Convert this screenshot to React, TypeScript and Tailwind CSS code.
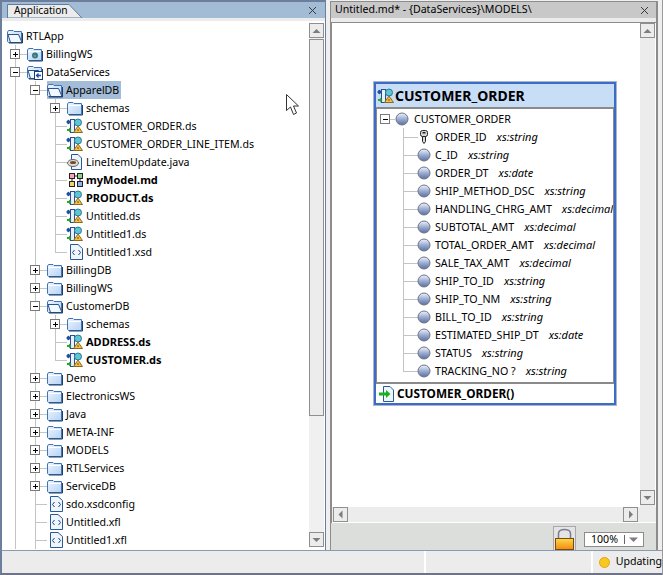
import type { ReactNode } from "react";

const font = "font-['Noto_Sans',sans-serif]";

// expander box on the tree lines
function Expander({ open }: { open: boolean }) {
  return (
    <svg width="11" height="11" viewBox="0 0 11 11" className="absolute left-[5px] top-[4px]">
      <rect x="0.5" y="0.5" width="9" height="9" fill="#fff" stroke="#7a7a7a" />
      <path d="M2.5 5H7.5" stroke="#000" shapeRendering="crispEdges" />
      {!open && <path d="M5 2.5V7.5" stroke="#000" shapeRendering="crispEdges" />}
    </svg>
  );
}

function FolderIcon({ open, badge }: { open?: boolean; badge?: "web" | "arrow" }) {
  return (
    <svg width="16" height="16" viewBox="0 0 16 16" className="shrink-0">
      <defs>
        <linearGradient id="fold" x1="0" y1="0" x2="1" y2="1">
          <stop offset="0" stopColor="#eef6ff" />
          <stop offset="1" stopColor="#b5d2f3" />
        </linearGradient>
      </defs>
      <path d="M0.5 4L1.5 2.5H6L7 3.5H14.5V14.5H1.5L0.5 13.5Z" fill="url(#fold)" stroke="#3f74b8" />
      {open ? (
        <path d="M1 6.5H11.5L15 14.5H3.5Z" fill="#f2f8ff" stroke="#2b5488" />
      ) : (
        <path d="M1.5 5.5H14" stroke="#fff" />
      )}
      <path d="M2 15H15.5V5" fill="none" stroke="#1d3f68" strokeWidth="1" />
      {badge === "web" && (
        <g>
          <circle cx="8" cy="9.5" r="3" fill="#33778a" />
          <path d="M6.5 9H9V11H7Z" fill="#7c9a4a" />
        </g>
      )}
      {badge === "arrow" && (
        <g>
          <rect x="7.5" y="7.5" width="8" height="8" fill="#fff" stroke="#1c3a78" />
          <path d="M14 11.5H10M11.5 9.5L9.5 11.5L11.5 13.5" fill="none" stroke="#1a4cb0" strokeWidth="1.3" />
        </g>
      )}
    </svg>
  );
}

function DataSpaceIcon() {
  return (
    <svg width="17" height="16" viewBox="0 0 17 16" className="shrink-0">
      <rect x="4.5" y="1.5" width="4" height="13" fill="#e8f1fb" stroke="#2a4f8f" />
      <rect x="1" y="2.5" width="3" height="3" fill="#1f4fa0" />
      <path d="M0 4L3 1.5V6.5Z" fill="#1f4fa0" />
      <path d="M1 12H4" stroke="#2aa52a" strokeWidth="2" />
      <path d="M3 9.5L5.5 12L3 14.5Z" fill="#2aa52a" />
      <circle cx="12" cy="4.5" r="3.5" fill="#5cc6d6" stroke="#2b7c90" />
      <path d="M12 8L16.5 14.5H7.5Z" fill="#f4c04a" stroke="#8a6a20" />
      <path d="M12 11V13" stroke="#7a4a10" />
    </svg>
  );
}

function CodeFileIcon() {
  return (
    <svg width="13" height="16" viewBox="0 0 13 16" className="shrink-0">
      <path d="M0.5 0.5H8L12.5 4.5V15.5H0.5Z" fill="#eef5fc" stroke="#2a5a96" />
      <path d="M4.5 6L2.5 8.5L4.5 11M8.5 6L10.5 8.5L8.5 11" fill="none" stroke="#22466f" />
    </svg>
  );
}

function JavaIcon() {
  return (
    <svg width="16" height="16" viewBox="0 0 16 16" className="shrink-0">
      <path d="M4.5 0.5H11L14.5 4V15.5H4.5Z" fill="#eef5fc" stroke="#2a5a96" />
      <ellipse cx="6" cy="9" rx="5.5" ry="3.5" fill="#dcdcdc" stroke="#666" />
      <ellipse cx="6" cy="8.5" rx="3" ry="1.5" fill="#7a4a22" />
    </svg>
  );
}

function ModelIcon() {
  return (
    <svg width="14" height="14" viewBox="0 0 14 14" className="shrink-0">
      <rect x="0.5" y="0.5" width="5" height="5" fill="#f4a6b8" stroke="#222" />
      <rect x="8.5" y="0.5" width="5" height="5" fill="#8fd08f" stroke="#222" />
      <rect x="0.5" y="8.5" width="5" height="5" fill="#f2d36b" stroke="#222" />
      <rect x="8.5" y="8.5" width="5" height="5" fill="#8fb4ea" stroke="#222" />
      <path d="M5.5 3H8.5M3 5.5V8.5M11 5.5V8.5" stroke="#222" />
    </svg>
  );
}

function Ball() {
  return (
    <svg width="14" height="14" viewBox="0 0 14 14" className="shrink-0">
      <defs>
        <linearGradient id="ball" x1="0" y1="0" x2="0" y2="1">
          <stop offset="0" stopColor="#f2f4fa" />
          <stop offset="0.5" stopColor="#9badd3" />
          <stop offset="1" stopColor="#5c6f9f" />
        </linearGradient>
      </defs>
      <circle cx="7" cy="7" r="6" fill="url(#ball)" stroke="#6c7486" />
    </svg>
  );
}

function KeyIcon() {
  return (
    <svg width="10" height="14" viewBox="0 0 10 14" className="shrink-0">
      <rect x="1.5" y="0.5" width="7" height="6" rx="2" fill="#d8d8d8" stroke="#222" />
      <rect x="3.5" y="2" width="3" height="1.5" fill="#222" />
      <path d="M3.5 6.5V11.5L5 13.5L6.5 11.5V6.5Z" fill="#d8d8d8" stroke="#222" />
    </svg>
  );
}

// arrow button of a scrollbar
function ScrollBtn({ dir }: { dir: "up" | "down" | "left" | "right" }) {
  const paths = {
    up: "M3 9.5L7 5.5L11 9.5Z",
    down: "M3 5.5L11 5.5L7 9.5Z",
    left: "M9 3L9 11L5 7Z",
    right: "M5.5 3L5.5 11L9.5 7Z",
  };
  return (
    <div className="flex h-[15px] w-[15px] shrink-0 items-center justify-center border border-[#8f8f8f] bg-[#ececec]">
      <svg width="13" height="13" viewBox="0.5 0.5 13 13">
        <path d={paths[dir]} fill="#7d7d7d" />
      </svg>
    </div>
  );
}

function CloseX() {
  return (
    <svg width="9" height="9" viewBox="0 0 9 9">
      <path d="M1 1L8 8M8 1L1 8" stroke="#3a3a3a" fill="none" />
    </svg>
  );
}

type Row = {
  label: string;
  depth: number;
  last?: boolean;
  exp?: "open" | "closed";
  icon: ReactNode;
  bold?: boolean;
  selected?: boolean;
};

const ds = <DataSpaceIcon />;
const code = <CodeFileIcon />;
const closed = <FolderIcon />;
const open = <FolderIcon open />;

const rows: Row[] = [
  { label: "RTLApp", depth: 0, icon: open },
  { label: "BillingWS", depth: 1, exp: "closed", icon: <FolderIcon badge="web" /> },
  { label: "DataServices", depth: 1, exp: "open", icon: <FolderIcon open badge="arrow" /> },
  { label: "ApparelDB", depth: 2, exp: "open", icon: open, selected: true },
  { label: "schemas", depth: 3, exp: "closed", icon: closed },
  { label: "CUSTOMER_ORDER.ds", depth: 3, icon: ds },
  { label: "CUSTOMER_ORDER_LINE_ITEM.ds", depth: 3, icon: ds },
  { label: "LineItemUpdate.java", depth: 3, icon: <JavaIcon /> },
  { label: "myModel.md", depth: 3, icon: <ModelIcon />, bold: true },
  { label: "PRODUCT.ds", depth: 3, icon: ds, bold: true },
  { label: "Untitled.ds", depth: 3, icon: ds },
  { label: "Untitled1.ds", depth: 3, icon: ds },
  { label: "Untitled1.xsd", depth: 3, icon: code, last: true },
  { label: "BillingDB", depth: 2, exp: "closed", icon: closed },
  { label: "BillingWS", depth: 2, exp: "closed", icon: closed },
  { label: "CustomerDB", depth: 2, exp: "open", icon: open },
  { label: "schemas", depth: 3, exp: "closed", icon: closed },
  { label: "ADDRESS.ds", depth: 3, icon: ds, bold: true },
  { label: "CUSTOMER.ds", depth: 3, icon: ds, bold: true, last: true },
  { label: "Demo", depth: 2, exp: "closed", icon: closed },
  { label: "ElectronicsWS", depth: 2, exp: "closed", icon: closed },
  { label: "Java", depth: 2, exp: "closed", icon: closed },
  { label: "META-INF", depth: 2, exp: "closed", icon: closed },
  { label: "MODELS", depth: 2, exp: "closed", icon: closed },
  { label: "RTLServices", depth: 2, exp: "closed", icon: closed },
  { label: "ServiceDB", depth: 2, exp: "closed", icon: closed },
  { label: "sdo.xsdconfig", depth: 2, icon: code },
  { label: "Untitled.xfl", depth: 2, icon: code },
  { label: "Untitled1.xfl", depth: 2, icon: code },
];

function TreeRow({ row }: { row: Row }) {
  const cols = Array.from({ length: row.depth }, (_, i) => i);
  return (
    <div className="flex h-[18px] items-center pl-[3px]">
      {cols.map((i) => {
        const isConn = i === row.depth - 1;
        return (
          <div key={i} className="relative h-[18px] w-5 shrink-0">
            {(!isConn || !row.last) && (
              <div className="absolute left-[10px] top-0 h-[18px] w-px bg-[#c4c4c4]" />
            )}
            {isConn && row.last && (
              <div className="absolute left-[10px] top-0 h-[9px] w-px bg-[#c4c4c4]" />
            )}
            {isConn && <div className="absolute left-[10px] top-[9px] h-px w-[12px] bg-[#c4c4c4]" />}
            {isConn && row.exp && <Expander open={row.exp === "open"} />}
          </div>
        );
      })}
      <div className={`relative z-10 ml-[2px] flex h-[18px] items-center ${row.selected ? "bg-[#a3bcd8]" : ""}`}>
        <div className="flex w-[19px] shrink-0 items-center justify-end pr-[3px]">{row.icon}</div>
        <span
          className={`whitespace-nowrap pr-[2px] leading-[18px] text-black ${row.bold ? "text-[11px] font-bold" : "text-[10.6px]"}`}
        >
          {row.label}
        </span>
      </div>
    </div>
  );
}

const fields: { name: string; type: string; key?: boolean }[] = [
  { name: "ORDER_ID", type: "xs:string", key: true },
  { name: "C_ID", type: "xs:string" },
  { name: "ORDER_DT", type: "xs:date" },
  { name: "SHIP_METHOD_DSC", type: "xs:string" },
  { name: "HANDLING_CHRG_AMT", type: "xs:decimal" },
  { name: "SUBTOTAL_AMT", type: "xs:decimal" },
  { name: "TOTAL_ORDER_AMT", type: "xs:decimal" },
  { name: "SALE_TAX_AMT", type: "xs:decimal" },
  { name: "SHIP_TO_ID", type: "xs:string" },
  { name: "SHIP_TO_NM", type: "xs:string" },
  { name: "BILL_TO_ID", type: "xs:string" },
  { name: "ESTIMATED_SHIP_DT", type: "xs:date" },
  { name: "STATUS", type: "xs:string" },
  { name: "TRACKING_NO ?", type: "xs:string" },
];

function DiagramCard() {
  return (
    <div className="w-[242px] border-2 border-[#3b6cc6] bg-white outline outline-1 outline-[#a9b6cc]">
      <div className="flex h-[23px] items-center gap-px bg-[#c8def6] pl-px">
        <DataSpaceIcon />
        <span className="text-[14px] font-bold text-black">CUSTOMER_ORDER</span>
      </div>
      <div className="h-[2px] bg-[#8a8a8a]" />
      <div className="overflow-hidden border-x border-x-[#8a8a8a] pb-[2px] pt-px">
        <div className="relative flex h-[18px] items-center pl-[3px]">
          <svg width="10" height="10" viewBox="0 0 10 10" className="shrink-0">
            <rect x="0.5" y="0.5" width="9" height="9" fill="#fff" stroke="#7a7a7a" />
            <path d="M2.5 5H7.5" stroke="#000" shapeRendering="crispEdges" />
          </svg>
          <div className="h-px w-[5px] bg-[#c4c4c4]" />
          <Ball />
          <span className="ml-[5px] text-[10.7px] text-black">CUSTOMER_ORDER</span>
        </div>
        {fields.map((f, i) => (
          <div key={f.name} className="flex h-[18px] items-center pl-[26px]">
            <div className="relative h-[18px] w-[14px] shrink-0">
              <div
                className={`absolute left-0 top-0 w-px bg-[#c4c4c4] ${i === fields.length - 1 ? "h-[9px]" : "h-[18px]"}`}
              />
              <div className="absolute left-0 top-[9px] h-px w-[15px] bg-[#c4c4c4]" />
            </div>
            <div className="relative z-10 flex w-[14px] shrink-0 justify-center">{f.key ? <KeyIcon /> : <Ball />}</div>
            <span className="ml-[4px] whitespace-nowrap text-[10.7px] text-black">{f.name}</span>
            <span className="ml-[10px] whitespace-nowrap text-[11px] italic text-black">{f.type}</span>
          </div>
        ))}
      </div>
      <div className="h-[2px] bg-[#8a8a8a]" />
      <div className="flex h-[19px] items-center gap-[2px] pl-[2px]">
        <svg width="17" height="16" viewBox="0 0 17 16" className="shrink-0">
          <path d="M5.5 0.5H12L15.5 4V15.5H5.5Z" fill="#eef5fc" stroke="#2a5a96" />
          <path d="M1 8H9" stroke="#19b319" strokeWidth="3" />
          <path d="M8 4L12.5 8L8 12Z" fill="#19b319" />
        </svg>
        <span className="text-[11.8px] font-bold text-black">CUSTOMER_ORDER()</span>
      </div>
    </div>
  );
}

export default function App() {
  return (
    <div className={`relative flex h-[575px] w-[663px] flex-col overflow-hidden border-r border-r-[#9a9a9a] bg-[#efefef] ${font}`}>
      <div className="flex h-[550px] gap-[4px]">
        {/* left panel */}
        <div className="flex h-[550px] w-[326px] shrink-0 flex-col border-l-2 border-r border-t-2 border-[#6b7f9c] bg-white">
          <div className="flex h-[16px] items-end justify-between bg-[#a3bcd6] pr-[8px]">
            <div className="relative ml-[5px] flex h-[14px] w-[76px] items-center pl-[7px] text-[10.2px] text-black">
              <svg width="76" height="14" viewBox="0 0 76 14" className="absolute left-0 top-0">
                <path d="M0.5 14V0.5H62L75 14Z" fill="#ececec" stroke="#5f7d9e" />
              </svg>
              <span className="relative">Application</span>
            </div>
            <div className="flex h-[16px] items-center">
              <CloseX />
            </div>
          </div>
          <div className="h-[3px] bg-[#ececec]" />
          <div className="flex min-h-0 flex-1">
            <div className="min-w-0 flex-1 overflow-hidden pt-[6px]">
              {rows.map((r, i) => (
                <TreeRow key={i} row={r} />
              ))}
            </div>
            <div className="mb-[3px] mr-px mt-[2px] flex w-[15px] shrink-0 flex-col bg-[#f0f0f0]">
              <ScrollBtn dir="up" />
              <div className="mt-px h-[377px] border border-[#8f8f8f] bg-[#ececec]" />
              <div className="flex-1" />
              <ScrollBtn dir="down" />
            </div>
          </div>
        </div>

        {/* right panel */}
        <div className="mt-px flex h-[549px] w-[328px] shrink-0 flex-col border-b-0 border-l border-r-2 border-t border-[#8c8c8c] bg-[#dcdedc]">
          <div className="flex h-[16px] items-center justify-between bg-[#c8c8c8] pl-[4px] pr-[7px] text-[10.6px] text-black">
            <span>Untitled.md* - {"{DataServices}"}\MODELS\</span>
            <CloseX />
          </div>
          <div className="h-[4px] bg-[#ececec]" />
          <div className="flex h-[501px] flex-col border-l border-t border-[#8c8c8c] bg-white pb-px">
            <div className="flex min-h-0 flex-1">
              <div className="flex-1 pl-[42px] pt-[59px]">
                <DiagramCard />
              </div>
              <div className="mr-px flex w-[15px] shrink-0 flex-col justify-between bg-[#ececec] pb-[2px]">
                <ScrollBtn dir="up" />
                <ScrollBtn dir="down" />
              </div>
            </div>
            <div className="flex h-[15px] justify-between bg-[#ececec] pl-px pr-[18px]">
              <ScrollBtn dir="left" />
              <ScrollBtn dir="right" />
            </div>
          </div>
          <div className="flex flex-1 items-end justify-end gap-[8px] pr-[12px]">
            <div className="flex h-[24px] w-[23px] items-end justify-center border-l border-r border-t border-[#a8a8a8] bg-[#e4e4e4]">
              <svg width="19" height="22" viewBox="0 0 19 22" className="shrink-0">
                <defs>
                  <linearGradient id="lock" x1="0" y1="0" x2="0" y2="1">
                    <stop offset="0" stopColor="#ffd84a" />
                    <stop offset="1" stopColor="#f08a10" />
                  </linearGradient>
                </defs>
                <path d="M3.5 10V5.5C3.5 0 15.5 0 15.5 5.5V10" fill="none" stroke="#7a7a96" strokeWidth="1.5" />
                <rect x="0.5" y="10.5" width="18" height="11" fill="url(#lock)" stroke="#7a4a10" />
              </svg>
            </div>
            <div className="mb-[3px] flex h-[15px] w-[60px] items-center border border-[#8c8c8c] bg-white text-[10.6px] text-black">
              <span className="w-[39px] text-center">100%</span>
              <div className="h-[9px] w-px bg-[#666]" />
              <svg width="18" height="10" viewBox="0 0 18 10" className="shrink-0">
                <path d="M4 2.5H13L8.5 7Z" fill="#7d7d7d" />
              </svg>
            </div>
          </div>
        </div>
      </div>

      {/* status bar */}
      <div className="flex h-[25px] gap-[2px] border-b-2 border-l-2 border-t border-b-[#6f7388] border-l-[#6b7f9c] border-t-[#8a9ab0] bg-white">
        <div className="w-[423px] bg-[#ececec]" />
        <div className="w-[165px] bg-[#ececec]" />
        <div className="flex flex-1 items-center gap-[6px] bg-[#ececec] pl-[6px] text-[10.6px] text-black">
          <svg width="11" height="11" viewBox="0 0 11 11" className="shrink-0">
            <circle cx="5.5" cy="5.5" r="5" fill="#f7c81e" stroke="#e8a215" />
          </svg>
          Updating
        </div>
      </div>

      {/* mouse pointer */}
      <svg width="14" height="22" viewBox="0 0 14 22" className="absolute left-[286px] top-[94px]">
        <path d="M0.5 0.5V16.5L4.5 13L7.5 20.5L10.5 19L7.5 12H12.5Z" fill="#fff" stroke="#333" />
      </svg>
    </div>
  );
}
